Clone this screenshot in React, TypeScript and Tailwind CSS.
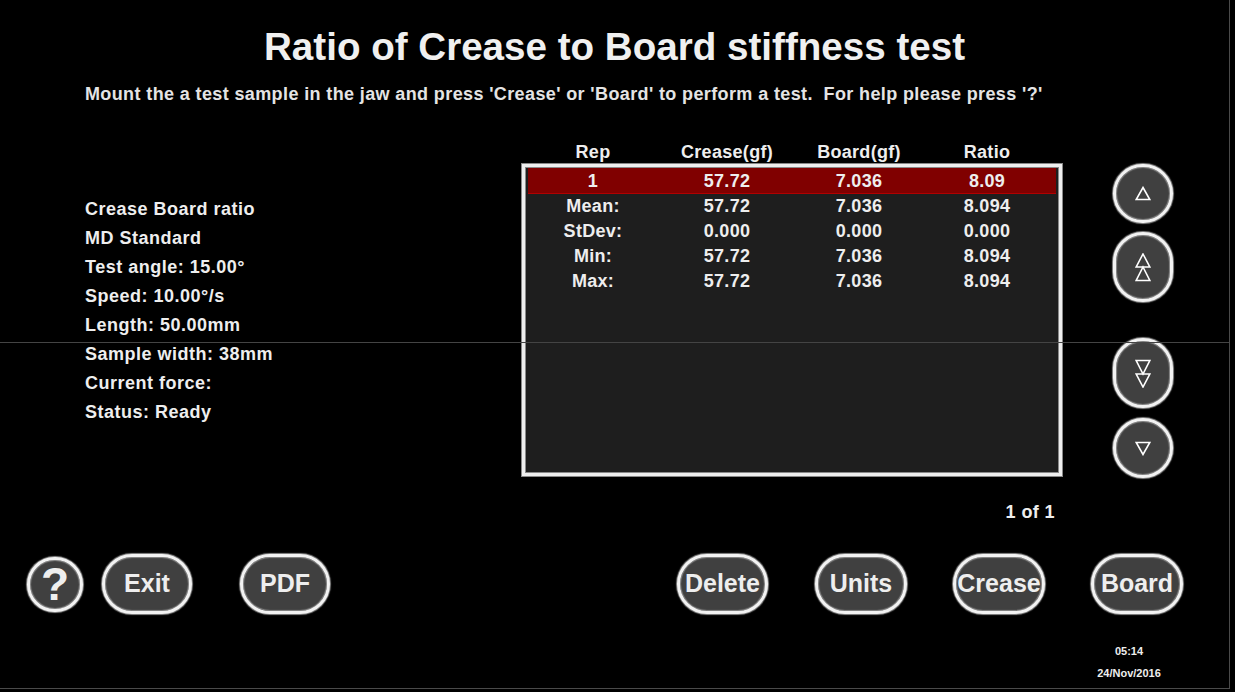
import React from "react";

const ring =
  "flex items-center justify-center bg-[#404040] border-[3px] border-[#f2f2f2] shadow-[0_0_1px_1px_#8a8a8a,inset_0_0_1px_1px_#8a8a8a] text-[#eeeeee]";

function UpOne() {
  return (
    <svg width="16" height="15" viewBox="0 0 16 15">
      <polygon points="8,1.5 14.8,13.5 1.2,13.5" fill="none" stroke="#fff" strokeWidth="1.6" />
    </svg>
  );
}
function DownOne() {
  return (
    <svg width="16" height="15" viewBox="0 0 16 15">
      <polygon points="1.2,1.5 14.8,1.5 8,13.5" fill="none" stroke="#fff" strokeWidth="1.6" />
    </svg>
  );
}
function UpTwo() {
  return (
    <svg width="16" height="29" viewBox="0 0 16 29">
      <polygon points="8,1 14.8,14 1.2,14" fill="none" stroke="#fff" strokeWidth="1.6" />
      <polygon points="8,14 14.8,27.5 1.2,27.5" fill="none" stroke="#fff" strokeWidth="1.6" />
    </svg>
  );
}
function DownTwo() {
  return (
    <svg width="16" height="29" viewBox="0 0 16 29">
      <polygon points="1.2,1.5 14.8,1.5 8,15" fill="none" stroke="#fff" strokeWidth="1.6" />
      <polygon points="1.2,15 14.8,15 8,28" fill="none" stroke="#fff" strokeWidth="1.6" />
    </svg>
  );
}

const rows = [
  ["Mean:", "57.72", "7.036", "8.094"],
  ["StDev:", "0.000", "0.000", "0.000"],
  ["Min:", "57.72", "7.036", "8.094"],
  ["Max:", "57.72", "7.036", "8.094"],
];

const info = [
  "Crease Board ratio",
  "MD Standard",
  "Test angle: 15.00°",
  "Speed: 10.00°/s",
  "Length: 50.00mm",
  "Sample width: 38mm",
  "Current force:",
  "Status: Ready",
];

const grid = "grid grid-cols-[130px_138px_126px_130px] text-center";

export default function App() {
  return (
    <div
      className="min-h-screen w-full bg-black text-[#eeeeee] font-bold"
      style={{ fontFamily: '"Liberation Sans", Arial, sans-serif' }}
    >
      <div className="relative w-[1230px] h-[689px] border-r border-b border-[#4a4a4a] flex flex-col">
        <h1 className="mt-[25px] text-center text-[38.6px] leading-[44px] text-[#f0f0f0]">
          Ratio of Crease to Board stiffness test
        </h1>
        <p className="mt-[15px] pl-[85px] text-[18px] leading-[20px] tracking-[0.38px] text-[#e4e4e4] whitespace-pre">
          {"Mount the a test sample in the jaw and press 'Crease' or 'Board' to perform a test.  For help please press '?'"}
        </p>

        <div className="mt-[36px] h-[414px] flex">
          <div className="w-[522px] pl-[85px] pt-[55px] flex flex-col text-[18px] leading-[29px] tracking-[0.5px]">
            {info.map((t) => (
              <div key={t}>{t}</div>
            ))}
          </div>

          <div className="w-[541px] flex flex-col">
            <div className={`${grid} ml-[6px] h-[24px] text-[18px] leading-[24px] tracking-[0.3px]`}>
              <div>Rep</div>
              <div>Crease(gf)</div>
              <div>Board(gf)</div>
              <div>Ratio</div>
            </div>
            <div className="w-[540px] h-[312px] border-[3px] border-[#eeeeee] outline outline-1 outline-[#888]">
              <div className="h-full border border-[#8a8a8a] bg-[#1e1e1e] px-[2px] text-[18px] tracking-[0.3px]">
                <div className={`${grid} h-[26px] leading-[26px] bg-[#800000] border-b border-[#b00000]`}>
                  <div>1</div>
                  <div>57.72</div>
                  <div>7.036</div>
                  <div>8.09</div>
                </div>
                {rows.map((r) => (
                  <div key={r[0]} className={`${grid} h-[25px] leading-[25px]`}>
                    {r.map((c, i) => (
                      <div key={i}>{c}</div>
                    ))}
                  </div>
                ))}
              </div>
            </div>
            <div className="mt-[26px] pr-[8px] text-right text-[18px] leading-[20px] tracking-[0.4px]">1 of 1</div>
          </div>

          <div className="ml-[50px] pt-[24px] flex flex-col">
            <button className={`${ring} w-[60px] h-[59px] rounded-full`}>
              <UpOne />
            </button>
            <button className={`${ring} mt-[9px] w-[60px] h-[70px] rounded-full`}>
              <UpTwo />
            </button>
            <button className={`${ring} mt-[36px] w-[60px] h-[70px] rounded-full`}>
              <DownTwo />
            </button>
            <button className={`${ring} mt-[10px] w-[60px] h-[60px] rounded-full`}>
              <DownOne />
            </button>
          </div>
        </div>

        <div className="h-[60px] flex items-center text-[25px]">
          <button className={`${ring} ml-[27px] w-[56px] h-[55px] rounded-full text-[46px] font-bold leading-none`}>
            ?
          </button>
          <button className={`${ring} ml-[19px] w-[90px] h-[60px] rounded-full`}>Exit</button>
          <button className={`${ring} ml-[48px] w-[90px] h-[60px] rounded-full`}>PDF</button>
          <button className={`${ring} ml-[347px] w-[91px] h-[60px] rounded-full`}>Delete</button>
          <button className={`${ring} ml-[47px] w-[92px] h-[60px] rounded-full`}>Units</button>
          <button className={`${ring} ml-[46px] w-[92px] h-[60px] rounded-full`}>Crease</button>
          <button className={`${ring} ml-[46px] w-[92px] h-[60px] rounded-full`}>Board</button>
        </div>

        <div className="mt-[30px] ml-[1079px] w-[100px] flex flex-col items-center text-[11px] leading-[14px]">
          <div>05:14</div>
          <div className="mt-2">24/Nov/2016</div>
        </div>

        <div className="absolute left-0 right-0 top-[342px] h-px bg-[#444]" />
      </div>
    </div>
  );
}
